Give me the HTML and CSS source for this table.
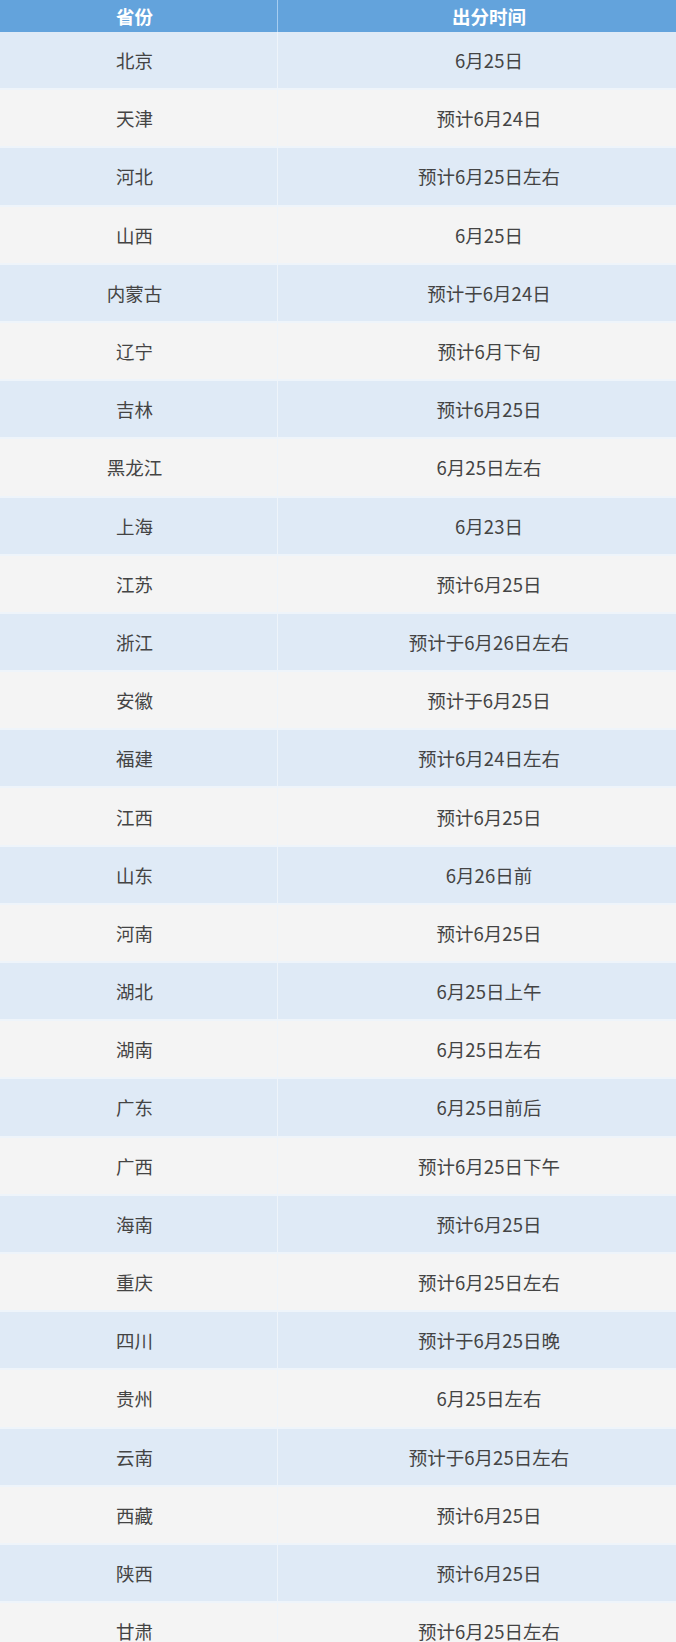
FILE: index.html
```html
<!DOCTYPE html>
<html lang="zh">
<head>
<meta charset="utf-8">
<title>各省出分时间</title>
<link rel="stylesheet" href="styles.css">
</head>
<body>
<div class="table">
  <div class="row head"><div class="cell">省份</div><div class="cell right">出分时间</div></div>
  <div class="row"><div class="cell">北京</div><div class="cell right">6月25日</div></div>
  <div class="row"><div class="cell">天津</div><div class="cell right">预计6月24日</div></div>
  <div class="row"><div class="cell">河北</div><div class="cell right">预计6月25日左右</div></div>
  <div class="row"><div class="cell">山西</div><div class="cell right">6月25日</div></div>
  <div class="row"><div class="cell">内蒙古</div><div class="cell right">预计于6月24日</div></div>
  <div class="row"><div class="cell">辽宁</div><div class="cell right">预计6月下旬</div></div>
  <div class="row"><div class="cell">吉林</div><div class="cell right">预计6月25日</div></div>
  <div class="row"><div class="cell">黑龙江</div><div class="cell right">6月25日左右</div></div>
  <div class="row"><div class="cell">上海</div><div class="cell right">6月23日</div></div>
  <div class="row"><div class="cell">江苏</div><div class="cell right">预计6月25日</div></div>
  <div class="row"><div class="cell">浙江</div><div class="cell right">预计于6月26日左右</div></div>
  <div class="row"><div class="cell">安徽</div><div class="cell right">预计于6月25日</div></div>
  <div class="row"><div class="cell">福建</div><div class="cell right">预计6月24日左右</div></div>
  <div class="row"><div class="cell">江西</div><div class="cell right">预计6月25日</div></div>
  <div class="row"><div class="cell">山东</div><div class="cell right">6月26日前</div></div>
  <div class="row"><div class="cell">河南</div><div class="cell right">预计6月25日</div></div>
  <div class="row"><div class="cell">湖北</div><div class="cell right">6月25日上午</div></div>
  <div class="row"><div class="cell">湖南</div><div class="cell right">6月25日左右</div></div>
  <div class="row"><div class="cell">广东</div><div class="cell right">6月25日前后</div></div>
  <div class="row"><div class="cell">广西</div><div class="cell right">预计6月25日下午</div></div>
  <div class="row"><div class="cell">海南</div><div class="cell right">预计6月25日</div></div>
  <div class="row"><div class="cell">重庆</div><div class="cell right">预计6月25日左右</div></div>
  <div class="row"><div class="cell">四川</div><div class="cell right">预计于6月25日晚</div></div>
  <div class="row"><div class="cell">贵州</div><div class="cell right">6月25日左右</div></div>
  <div class="row"><div class="cell">云南</div><div class="cell right">预计于6月25日左右</div></div>
  <div class="row"><div class="cell">西藏</div><div class="cell right">预计6月25日</div></div>
  <div class="row"><div class="cell">陕西</div><div class="cell right">预计6月25日</div></div>
  <div class="row"><div class="cell">甘肃</div><div class="cell right">预计6月25日左右</div></div>
</div>
</body>
</html>
```
FILE: styles.css
```css
html, body {
  margin: 0;
  padding: 0;
  background: #f4f4f4;
  overflow: hidden;
}
body {
  width: 676px;
  height: 1642px;
  font-family: "Noto Sans CJK SC", "Noto Sans", sans-serif;
  color: #444444;
}
.table {
  width: 700px;
  display: flex;
  flex-direction: column;
}
.row {
  display: grid;
  grid-template-columns: 277px 423px;
  height: 58.2px;
  box-sizing: border-box;
  border-bottom: 2px solid #eef4fa;
  font-size: 18.5px;
  background: #f4f4f4;
}
.row:nth-child(even) {
  background: #dfeaf6;
}
.cell {
  display: flex;
  align-items: center;
  justify-content: center;
  padding-right: 8px;
}
.right {
  border-left: 1px solid #eef4fa;
  padding-right: 0;
}
.row.head {
  height: 32px;
  border-bottom: none;
  background: #63a3dc;
  color: #ffffff;
  font-weight: 700;
  font-size: 18.5px;
}
.row.head .right {
  border-left-color: #a6cdf0;
}
```
